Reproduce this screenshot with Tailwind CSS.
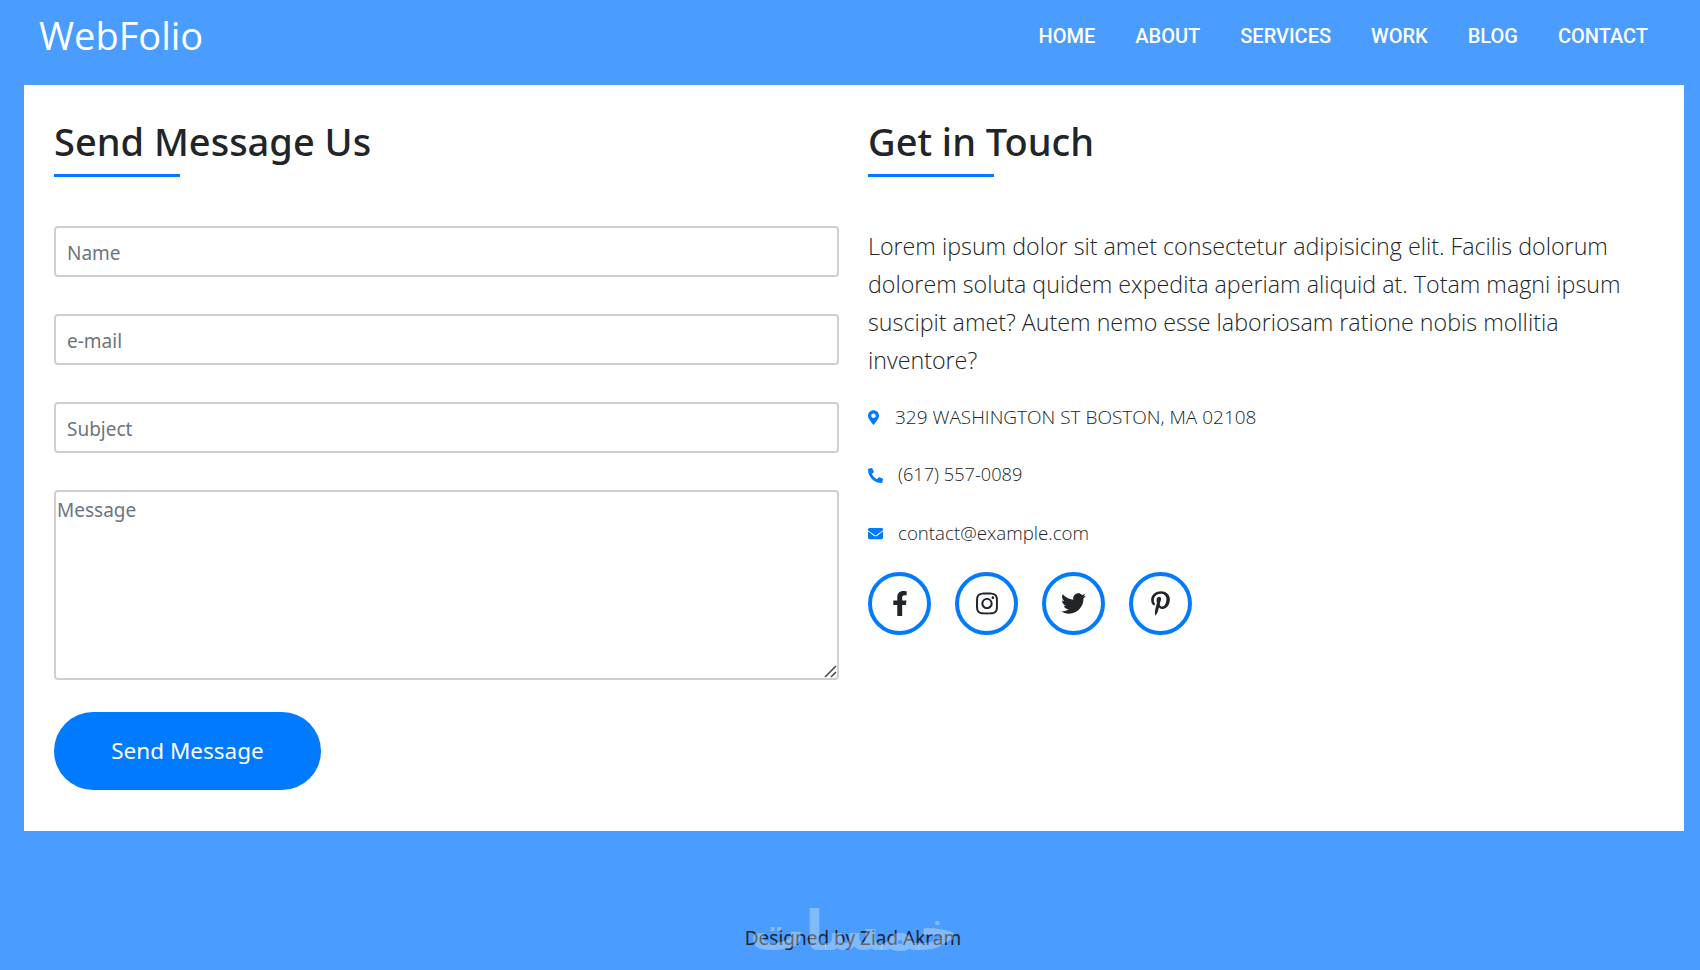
<!DOCTYPE html>
<html lang="en">
<head>
    <meta charset="UTF-8">
    <meta name="viewport" content="width=device-width, initial-scale=1.0">
    <title>WebFolio - Contact</title>
    <script src="https://cdn.jsdelivr.net/npm/@tailwindcss/browser@4"></script>
</head>
<body class="relative h-[970px] overflow-hidden bg-[#4a9cff] font-['Noto_Sans','Open_Sans',sans-serif] text-[#212529]">
    <!-- Navbar -->
    <nav class="h-[85px] flex items-center justify-between pl-[39px] pr-[52px] pb-[13px]">
        <a href="#" class="mb-[2px] text-[38px] text-white font-['Open_Sans',sans-serif]">WebFolio</a>
        <ul class="flex gap-10 text-[20px] font-medium text-white font-['Roboto',sans-serif] uppercase">
            <li><a href="#">Home</a></li>
            <li><a href="#">About</a></li>
            <li><a href="#">Services</a></li>
            <li><a href="#">Work</a></li>
            <li><a href="#">Blog</a></li>
            <li><a href="#">Contact</a></li>
        </ul>
    </nav>

    <!-- Contact section -->
    <main class="ml-6 mr-4 h-[746px] bg-white px-[30px] pt-[30px] grid grid-cols-2 gap-x-[30px]">
        <section>
            <h2 class="pt-[1px] text-[38px] leading-[50px] font-medium">Send Message Us</h2>
            <div class="mt-[8px] h-[3px] w-[126px] bg-[#007bff]"></div>
            <form class="mt-[49px]">
                <input type="text" placeholder="Name" class="block w-full h-[51px] px-[11px] pt-[2px] border-2 border-[#cfcfcf] rounded text-[19px] placeholder:text-[#6c757d]">
                <input type="text" placeholder="e-mail" class="block w-full h-[51px] mt-[37px] px-[11px] pt-[2px] border-2 border-[#cfcfcf] rounded text-[19px] placeholder:text-[#6c757d]">
                <input type="text" placeholder="Subject" class="block w-full h-[51px] mt-[37px] px-[11px] pt-[2px] border-2 border-[#cfcfcf] rounded text-[19px] placeholder:text-[#6c757d]">
                <div class="relative mt-[37px]">
                    <textarea placeholder="Message" class="block w-full h-[190px] px-[1px] py-1 border-2 border-[#cfcfcf] rounded text-[19px] placeholder:text-[#6c757d] resize-none"></textarea>
                    <!-- resize grip -->
                    <svg viewBox="0 0 13 13" class="absolute right-[2px] bottom-[2px] w-[13px] h-[13px] stroke-[#444] stroke-[1.5]"><path d="M1 12 12 1M7 12l5-5" fill="none"/></svg>
                </div>
                <button type="button" class="mt-[32px] w-[267px] h-[78px] rounded-full bg-[#007bff] text-white text-[22.5px]">Send Message</button>
            </form>
        </section>

        <section class="-ml-[1px]">
            <h2 class="pt-[1px] text-[38px] leading-[50px] font-medium">Get in Touch</h2>
            <div class="mt-[8px] h-[3px] w-[126px] bg-[#007bff]"></div>
            <p class="mt-[50px] text-[23.25px] leading-[38px] font-light font-['Open_Sans',sans-serif]">Lorem ipsum dolor sit amet consectetur adipisicing elit. Facilis dolorum dolorem soluta quidem expedita aperiam aliquid at. Totam magni ipsum suscipit amet? Autem nemo esse laboriosam ratione nobis mollitia inventore?</p>

            <div class="mt-[23px] flex items-center h-[30px] text-[19px] font-light font-['Open_Sans',sans-serif]">
                <svg viewBox="0 0 384 512" class="w-[11px] h-[15px] fill-[#007bff]"><path d="M172.268 501.67C26.97 291.031 0 269.413 0 192 0 85.961 85.961 0 192 0s192 85.961 192 192c0 77.413-26.97 99.031-172.268 309.67-9.535 13.774-29.93 13.773-39.464 0zM192 272c44.183 0 80-35.817 80-80s-35.817-80-80-80-80 35.817-80 80 35.817 80 80 80z"/></svg>
                <span class="ml-[16px]">329 WASHINGTON ST BOSTON, MA 02108</span>
            </div>
            <div class="mt-[28px] flex items-center h-[30px] text-[18.2px] font-light font-['Open_Sans',sans-serif]">
                <svg viewBox="0 0 512 512" class="w-[15px] h-[15px] fill-[#007bff]"><path d="M497.39 361.8l-112-48a24 24 0 0 0-28 6.9l-49.6 60.6A370.66 370.66 0 0 1 130.6 204.11l60.6-49.6a23.94 23.94 0 0 0 6.9-28l-48-112A24.16 24.16 0 0 0 122.6.61l-104 24A24 24 0 0 0 0 48c0 256.5 207.9 464 464 464a24 24 0 0 0 23.4-18.6l24-104a24.29 24.29 0 0 0-14.01-27.6z"/></svg>
                <span class="ml-[15px]">(617) 557-0089</span>
            </div>
            <div class="mt-[28px] flex items-center h-[30px] text-[18.7px] font-light font-['Open_Sans',sans-serif]">
                <svg viewBox="0 0 512 512" class="w-[15px] h-[15px] fill-[#007bff]"><path d="M502.3 190.8c3.9-3.1 9.7-.2 9.7 4.7V400c0 26.5-21.5 48-48 48H48c-26.5 0-48-21.5-48-48V195.6c0-5 5.7-7.8 9.7-4.7 22.4 17.4 52.1 39.5 154.1 113.6 21.1 15.4 56.7 47.8 92.2 47.6 35.7.3 72-32.8 92.3-47.6 102-74.1 131.6-96.3 154-113.7zM256 320c23.2.4 56.6-29.2 73.4-41.4 132.7-96.3 142.8-104.7 173.4-128.7 5.8-4.5 9.2-11.5 9.2-18.9v-19c0-26.5-21.5-48-48-48H48C21.5 64 0 85.5 0 112v19c0 7.4 3.4 14.3 9.2 18.9 30.6 23.9 40.7 32.4 173.4 128.7 16.8 12.2 50.2 41.8 73.4 41.4z"/></svg>
                <span class="ml-[15px]">contact@example.com</span>
            </div>

            <div class="mt-[24px] flex gap-[24px]">
                <a href="#" class="w-[63px] h-[63px] rounded-full border-4 border-[#007bff] flex items-center justify-center">
                    <svg viewBox="0 0 320 512" class="w-[16px] h-[25px] fill-[#212529]"><path d="M279.14 288l14.22-92.66h-88.91v-60.13c0-25.35 12.42-50.06 52.24-50.06h40.42V6.26S260.43 0 225.36 0c-73.22 0-121.08 44.38-121.08 124.72v70.62H22.89V288h81.39v224h100.17V288z"/></svg>
                </a>
                <a href="#" class="w-[63px] h-[63px] rounded-full border-4 border-[#007bff] flex items-center justify-center">
                    <svg viewBox="0 0 448 512" class="w-[22px] h-[25px] fill-[#212529]"><path d="M224.1 141c-63.6 0-114.9 51.3-114.9 114.9s51.3 114.9 114.9 114.9S339 319.5 339 255.9 287.7 141 224.1 141zm0 189.6c-41.1 0-74.7-33.5-74.7-74.7s33.5-74.7 74.7-74.7 74.7 33.5 74.7 74.7-33.6 74.7-74.7 74.7zm146.4-194.3c0 14.9-12 26.8-26.8 26.8-14.9 0-26.8-12-26.8-26.8s12-26.8 26.8-26.8 26.8 12 26.8 26.8zm76.1 27.2c-1.7-35.9-9.9-67.7-36.2-93.9-26.2-26.2-58-34.4-93.9-36.2-37-2.1-147.9-2.1-184.9 0-35.8 1.7-67.6 9.9-93.9 36.1s-34.4 58-36.2 93.9c-2.1 37-2.1 147.9 0 184.9 1.7 35.9 9.9 67.7 36.2 93.9s58 34.4 93.9 36.2c37 2.1 147.9 2.1 184.9 0 35.9-1.7 67.7-9.9 93.9-36.2 26.2-26.2 34.4-58 36.2-93.9 2.1-37 2.1-147.8 0-184.8zM398.8 388c-7.8 19.6-22.9 34.7-42.6 42.6-29.5 11.7-99.5 9-132.1 9s-102.7 2.6-132.1-9c-19.6-7.8-34.7-22.9-42.6-42.6-11.7-29.5-9-99.5-9-132.1s-2.6-102.7 9-132.1c7.8-19.6 22.9-34.7 42.6-42.6 29.5-11.7 99.5-9 132.1-9s102.7-2.6 132.1 9c19.6 7.8 34.7 22.9 42.6 42.6 11.7 29.5 9 99.5 9 132.1s2.7 102.7-9 132.1z"/></svg>
                </a>
                <a href="#" class="w-[63px] h-[63px] rounded-full border-4 border-[#007bff] flex items-center justify-center">
                    <svg viewBox="0 0 512 512" class="w-[25px] h-[25px] fill-[#212529]"><path d="M459.37 151.716c.325 4.548.325 9.097.325 13.645 0 138.72-105.583 298.558-298.558 298.558-59.452 0-114.68-17.219-161.137-47.106 8.447.974 16.568 1.299 25.34 1.299 49.055 0 94.213-16.568 130.274-44.832-46.132-.975-84.792-31.188-98.112-72.772 6.498.974 12.995 1.624 19.818 1.624 9.421 0 18.843-1.3 27.614-3.573-48.081-9.747-84.143-51.98-84.143-102.985v-1.299c13.969 7.797 30.214 12.67 47.431 13.319-28.264-18.843-46.781-51.005-46.781-87.391 0-19.492 5.197-37.36 14.294-52.954 51.655 63.675 129.3 105.258 216.365 109.807-1.624-7.797-2.599-15.918-2.599-24.04 0-57.828 46.782-104.934 104.934-104.934 30.213 0 57.502 12.67 76.67 33.137 23.715-4.548 46.456-13.32 66.599-25.34-7.798 24.366-24.366 44.833-46.132 57.827 21.117-2.273 41.584-8.122 60.426-16.243-14.292 20.791-32.161 39.308-52.628 54.253z"/></svg>
                </a>
                <a href="#" class="w-[63px] h-[63px] rounded-full border-4 border-[#007bff] flex items-center justify-center">
                    <svg viewBox="0 0 384 512" class="w-[19px] h-[25px] fill-[#212529]"><path d="M204 6.5C101.4 6.5 0 74.9 0 185.6 0 256 39.6 296 63.6 296c9.9 0 15.6-27.6 15.6-35.4 0-9.3-23.7-29.1-23.7-67.8 0-80.4 61.2-137.4 140.4-137.4 68.1 0 118.5 38.7 118.5 109.8 0 53.1-21.3 152.7-90.3 152.7-24.9 0-46.2-18-46.2-43.8 0-37.8 26.4-74.4 26.4-113.4 0-66.2-93.9-54.2-93.9 25.8 0 16.8 2.1 35.4 9.6 50.7-13.8 59.4-42 147.9-42 209.1 0 18.9 2.7 37.5 4.5 56.4 3.4 3.8 1.7 3.4 6.9 1.5 50.4-69 48.6-82.5 71.4-172.8 12.3 23.4 44.1 36 69.3 36 106.2 0 153.9-103.5 153.9-196.8C384 71.3 298.2 6.5 204 6.5z"/></svg>
                </a>
            </div>
        </section>
    </main>

    <!-- Footer -->
    <footer class="pt-[94px] pl-[6px] text-center text-[19px] leading-[26px] text-[#212529]">Designed by Ziad Akram</footer>

    <!-- Site watermark over the footer -->
    <div dir="rtl" class="absolute left-[749px] top-[898px] w-[210px] text-center text-[55px] leading-[66px] font-bold text-white/30 font-['DejaVu_Sans',sans-serif]">خمسات</div>
</body>
</html>
